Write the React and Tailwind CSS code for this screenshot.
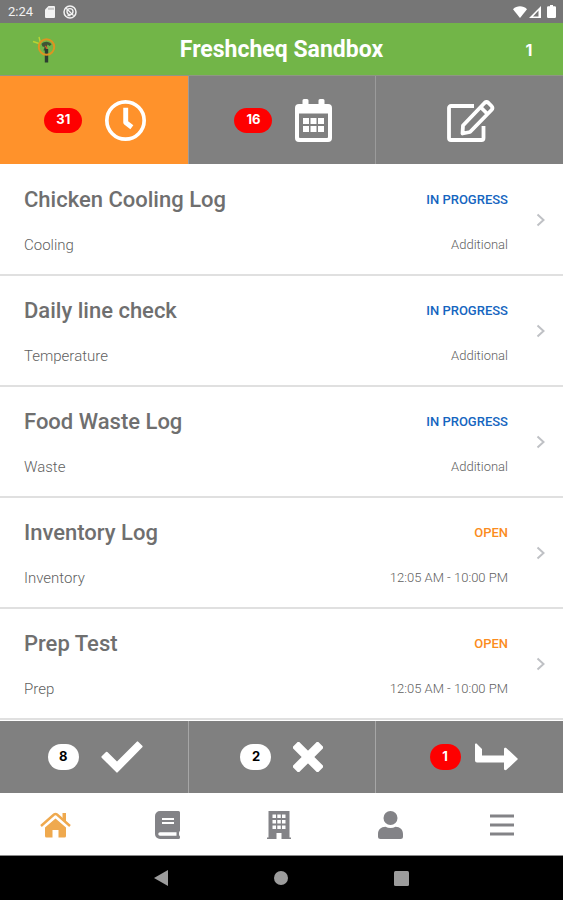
const LOGS = [
  { title: 'Chicken Cooling Log', type: 'Cooling', status: 'IN PROGRESS', when: 'Additional' },
  { title: 'Daily line check', type: 'Temperature', status: 'IN PROGRESS', when: 'Additional' },
  { title: 'Food Waste Log', type: 'Waste', status: 'IN PROGRESS', when: 'Additional' },
  { title: 'Inventory Log', type: 'Inventory', status: 'OPEN', when: '12:05 AM - 10:00 PM' },
  { title: 'Prep Test', type: 'Prep', status: 'OPEN', when: '12:05 AM - 10:00 PM' },
];

function StatusBar() {
  return (
    <div className="flex h-[23px] items-center justify-between bg-[#767676] pr-[7px] pl-2 text-[#f2f2f2]">
      <div className="flex items-center">
        <span className="text-[13px] leading-4">2:24</span>
        <svg className="ml-3 h-3 w-[10px]" viewBox="0 0 10 12" fill="currentColor">
          <path d="M3.5 0H9a1 1 0 0 1 1 1v10a1 1 0 0 1-1 1H1a1 1 0 0 1-1-1V3.5z" />
          <path d="M4 1.8v2M6 1.8v2M8 1.8v2" stroke="#767676" strokeWidth="0.7" />
        </svg>
        <svg className="ml-2 size-[14px]" viewBox="0 0 14 14" fill="none" stroke="currentColor">
          <circle cx="7" cy="7" r="6" strokeWidth="1.5" />
          <circle cx="7" cy="6.6" r="3" strokeWidth="1.4" />
          <path d="M3.2 3.2l7.4 7.4M4.5 10.5h3" strokeWidth="1.3" />
        </svg>
      </div>
      <div className="flex items-center gap-[2px] text-white">
        <svg className="h-3 w-[14px]" viewBox="0 0 14 12" fill="currentColor">
          <path d="M7 12L0 3.2C4-.6 10-.6 14 3.2z" />
        </svg>
        <svg className="h-3 w-3" viewBox="0 0 12 12" fill="currentColor">
          <path fillRule="evenodd" d="M12 0v12H0zM9.500 4.500L4 10.600h5.500z" />
        </svg>
        <svg className="ml-1 h-[13px] w-[9px]" viewBox="0 0 9 13" fill="currentColor">
          <path d="M3 0h3v1.2h1.8A1.2 1.2 0 0 1 9 2.4v9.4A1.2 1.2 0 0 1 7.800 13H1.200A1.200 1.200 0 0 1 0 11.800V2.400A1.200 1.200 0 0 1 1.200 1.200H3z" />
        </svg>
      </div>
    </div>
  );
}

function Header() {
  return (
    <header className="grid h-[52px] grid-cols-[72px_1fr_72px] items-center bg-[#72b548] pt-[2px]">
      <svg className="ml-8 h-7 w-6" viewBox="0 0 24 28" fill="none" aria-label="Freshcheq" role="img">
        <path d="M1 5.500l6 2M7 1l1.500 6" stroke="#b9d432" strokeWidth="1.400" />
        <path d="M9.500 8c2.500-3 8-3 10 .5l-2 1.500-2-1.500-1 3 1 3h-4l1-3.500-2-.5z" fill="#3f5534" />
        <path d="M13 10l2 2-1 2.500" stroke="#d0562d" strokeWidth="1.200" />
        <path d="M14.500 13v13.500" stroke="#2c3d31" strokeWidth="3.400" />
        <circle cx="14.500" cy="11" r="7.700" stroke="#dc9422" strokeWidth="2" />
      </svg>
      <h1 className="text-center text-[23px] leading-7 font-bold text-white">Freshcheq Sandbox</h1>
      <span className="pl-1 text-center font-['Inter',sans-serif] text-base font-bold text-white">1</span>
    </header>
  );
}

function Badge({ children, light, tall }) {
  return (
    <span
      className={`flex items-center justify-center rounded-full font-['Inter',sans-serif] text-[13px] font-bold ${
        light ? 'bg-white text-black' : 'bg-[#fe0000] text-white'
      } ${tall ? 'h-[26px] w-[31px]' : 'h-[25px] w-[38px]'}`}
    >
      {children}
    </span>
  );
}

function Tabs() {
  const base = 'flex items-center justify-center gap-[23px] border-l border-[#9b9b9b] pl-[3px] first:border-l-0';
  return (
    <div className="grid h-[89px] grid-cols-3 border-t border-[#8f9784]">
      <button type="button" aria-label="Due now" className={`${base} bg-[#ff922b]`}>
        <Badge>31</Badge>
        <svg className="size-[41px] text-white" viewBox="0 0 40 40" fill="none" stroke="currentColor">
          <circle cx="20" cy="20" r="18.200" strokeWidth="3.600" />
          <path d="M20.200 7.500v14.500l6 4.500" strokeWidth="4.800" strokeLinejoin="round" />
        </svg>
      </button>
      <button type="button" aria-label="Scheduled" className={`${base} bg-[#808080]`}>
        <Badge>16</Badge>
        <svg className="h-[43px] w-[37px] text-white" viewBox="0 0 37 43" fill="currentColor">
          <path
            fillRule="evenodd"
            d="M9 0h3a1.500 1.500 0 0 1 1.500 1.500V5h10V1.500A1.500 1.500 0 0 1 25 0h3a1.500 1.500 0 0 1 1.500 1.500V5H33a4 4 0 0 1 4 4v30a4 4 0 0 1-4 4H4a4 4 0 0 1-4-4V9a4 4 0 0 1 4-4h3.500V1.500A1.500 1.500 0 0 1 9 0zM4 14.500V38a1 1 0 0 0 1 1h27a1 1 0 0 0 1-1V14.500z"
          />
          <path d="M8 19h6v6H8zM15.500 19h6v6h-6zM23 19h6v6h-6zM8 27h6v6H8zM15.500 27h6v6h-6zM23 27h6v6h-6z" />
        </svg>
      </button>
      <button type="button" aria-label="New entry" className={`${base} bg-[#808080]`}>
        <svg className="h-[43px] w-12 text-white" viewBox="0 0 48 43" fill="none" stroke="currentColor" strokeWidth="3.800" strokeLinejoin="round">
          <path d="M27 7H4a2 2 0 0 0-2 2v30a2 2 0 0 0 2 2h30.500a2 2 0 0 0 2-2V27" />
          <path d="M16 26.500L37.500 4a3 3 0 0 1 4 0l3 3a3 3 0 0 1 0 4L23 33l-7.500 1.500zM33.500 8l7 7" />
        </svg>
      </button>
    </div>
  );
}

function LogRow({ log }) {
  return (
    <li>
      <a href="#log" className="flex h-[111px] items-center border-b-2 border-[#e0e0e0] pr-[18px] pl-6">
        <div className="grid flex-1 grid-cols-[1fr_auto] gap-y-[21px] pt-px">
          <h2 className="text-[22px] leading-7 font-medium text-[#6f6f6f]">{log.title}</h2>
          <span
            className={`text-right text-[13px] leading-7 font-medium ${
              log.status === 'OPEN' ? 'text-[#fb8c1e]' : 'text-[#1565c0]'
            }`}
          >
            {log.status}
          </span>
          <span className="text-[15px] leading-5 font-light text-[#5f5f5f]">{log.type}</span>
          <span className="text-right text-[13px] leading-5 font-light text-[#5f5f5f]">{log.when}</span>
        </div>
        <svg className="ml-7 h-[14px] w-[9px]" viewBox="0 0 9 14" fill="none" stroke="#bfc1c5" strokeWidth="2">
          <path d="M1.500 1.500L7.500 7l-6 5.500" />
        </svg>
      </a>
    </li>
  );
}

function Outcomes() {
  const base = 'flex items-center justify-center border-l border-[#a6a6a6] bg-[#808080] first:border-l-0';
  return (
    <div className="mt-px grid h-[72px] grid-cols-3">
      <button type="button" aria-label="Completed" className={`${base} gap-[22px] pl-[3px]`}>
        <Badge light tall>8</Badge>
        <svg className="h-8 w-[42px] text-white" viewBox="0 0 42 32" fill="currentColor">
          <path d="M.700 16.700a1 1 0 0 1 0-1.400l4.300-4.300a1 1 0 0 1 1.400 0L16 20.500 35.800.700a1 1 0 0 1 1.400 0L41.300 4.800a1 1 0 0 1 0 1.400L16.700 31.300a1 1 0 0 1-1.400 0z" />
        </svg>
      </button>
      <button type="button" aria-label="Missed" className={`${base} gap-[22px]`}>
        <Badge light tall>2</Badge>
        <svg className="size-[30px] text-white" viewBox="0 0 30 30" fill="currentColor">
          <rect x="-3" y="10.500" width="36" height="9" rx="1.500" transform="rotate(45 15 15)" />
          <rect x="-3" y="10.500" width="36" height="9" rx="1.500" transform="rotate(-45 15 15)" />
        </svg>
      </button>
      <button type="button" aria-label="Forwarded" className={`${base} gap-[14px] pl-2`}>
        <Badge tall>1</Badge>
        <svg className="h-7 w-[43px] text-white" viewBox="0 0 43 28" fill="currentColor">
          <path d="M0 1.500C0 .5 1.500.3 2 1L7 6v6.500h22V6c0-1 1.500-1.500 2.500-.8L42 15c1 .7 1 1.300 0 2L31.500 26.800c-1 .7-2.500.2-2.500-.8v-6.500H2a2 2 0 0 1-2-2z" />
        </svg>
      </button>
    </div>
  );
}

function BottomNav() {
  return (
    <nav className="grid h-[63px] grid-cols-5 border-b border-[#8a8a8a] bg-white pt-px pr-[5px] text-[#838387] *:flex *:items-center *:justify-center">
      <a href="#home" aria-label="Home">
        <svg className="h-[26px] w-[31px] text-[#efa94e]" viewBox="0 0 31 26" fill="currentColor">
          <path d="M15.500 6.500L26 15.500V24a1.500 1.500 0 0 1-1.500 1.500H18.500V18h-6v7.500H6.500A1.500 1.500 0 0 1 5 24v-8.500z" />
          <path d="M1 14L14 2.500c1-.8 2-.8 3 0L30 14" fill="none" stroke="currentColor" strokeWidth="2.400" />
          <path d="M22.500 1H26v9l-3.500-3z" />
        </svg>
      </a>
      <a href="#records" aria-label="Records">
        <svg className="h-7 w-[25px]" viewBox="0 0 25 28" fill="currentColor">
          <path
            fillRule="evenodd"
            d="M5 0h18.500A1.500 1.500 0 0 1 25 1.500v18c0 .5-.3 1-.8 1.300-.3 1.300-.3 2.600 0 3.700.5.300.8.700.8 1.200v.8A1.500 1.500 0 0 1 23.500 28H5a5 5 0 0 1-5-5V5a5 5 0 0 1 5-5zM7 7v2h12V7zM7 11v2h12v-2zM5 21.200a1.700 1.700 0 0 0 0 3.500h16.500v-3.500z"
          />
        </svg>
      </a>
      <a href="#sites" aria-label="Sites">
        <svg className="h-7 w-6" viewBox="0 0 24 28" fill="currentColor">
          <path
            fillRule="evenodd"
            d="M1.500 0h21v26.500H24V28h-9.500v-6h-5v6H0v-1.500h1.500zM5.500 3.500v3.500H9V3.500zM10.300 3.500v3.500h3.500V3.500zM15 3.500v3.500h3.500V3.500zM5.500 9v3.500H9V9zM10.300 9v3.500h3.500V9zM15 9v3.500h3.500V9zM5.500 14.500V18H9v-3.500zM10.300 14.500V18h3.500v-3.500zM15 14.500V18h3.500v-3.500z"
          />
        </svg>
      </a>
      <a href="#profile" aria-label="Profile">
        <svg className="h-7 w-[25px]" viewBox="0 0 25 28" fill="currentColor">
          <circle cx="12.500" cy="7" r="7" />
          <path d="M7.500 15.800c3 1.600 7 1.600 10 0 4.500 0 7.500 3 7.500 7.200v2.500a2.500 2.500 0 0 1-2.500 2.500h-20A2.500 2.500 0 0 1 0 25.500V23c0-4.200 3-7.200 7.500-7.200z" />
        </svg>
      </a>
      <a href="#menu" aria-label="Menu">
        <svg className="h-[22px] w-6" viewBox="0 0 24 22" stroke="currentColor" strokeWidth="3">
          <path d="M0 2h24M0 11h24M0 20h24" />
        </svg>
      </a>
    </nav>
  );
}

function SystemNav() {
  return (
    <div className="flex h-11 items-center justify-center bg-black text-[#9c9c9c]">
      <button type="button" aria-label="Back">
        <svg className="h-4 w-[14px]" viewBox="0 0 14 16" fill="currentColor">
          <path d="M14 0v16L0 8z" />
        </svg>
      </button>
      <button type="button" aria-label="Home screen" className="mx-[106px]">
        <svg className="size-[14px]" viewBox="0 0 14 14" fill="currentColor">
          <circle cx="7" cy="7" r="7" />
        </svg>
      </button>
      <button type="button" aria-label="Recent apps">
        <svg className="size-[15px]" viewBox="0 0 15 15" fill="currentColor">
          <rect width="15" height="15" rx="1.500" />
        </svg>
      </button>
    </div>
  );
}

export default function App() {
  return (
    <div className="bg-white font-['Roboto',sans-serif]">
      <StatusBar />
      <Header />
      <Tabs />
      <ul className="pt-px">
        {LOGS.map((log) => (
          <LogRow key={log.title} log={log} />
        ))}
      </ul>
      <Outcomes />
      <BottomNav />
      <SystemNav />
    </div>
  );
}
